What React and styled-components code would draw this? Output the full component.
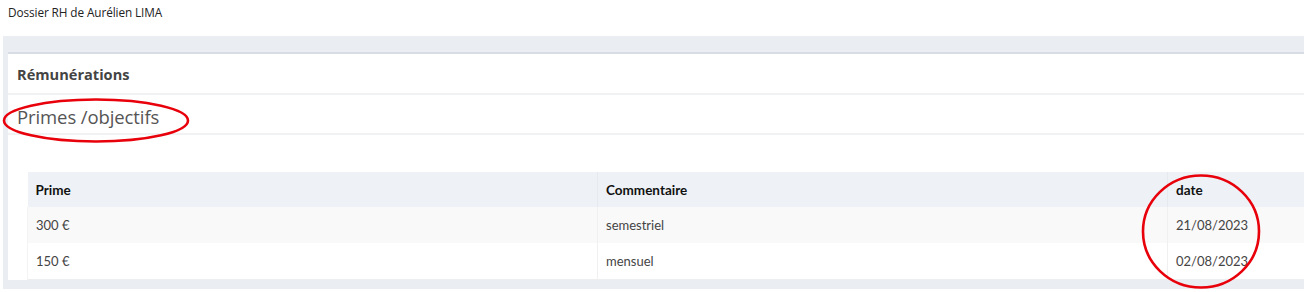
import styled, { createGlobalStyle } from "styled-components";

const GlobalStyle = createGlobalStyle`
  body {
    margin: 0;
    background: #fff;
    font-family: Lato, "Open Sans", sans-serif;
    overflow: hidden;
  }
`;

const rows = [
  { prime: "300 €", comment: "semestriel", date: "21/08/2023" },
  { prime: "150 €", comment: "mensuel", date: "02/08/2023" },
];

const App = () => {
  return (
    <Page>
      <GlobalStyle />
      <PageTitle>Dossier RH de Aurélien LIMA</PageTitle>
      <Shell>
        <Panel>
          <PanelHeader>Rémunérations</PanelHeader>
          <SubHeader>Primes /objectifs</SubHeader>
          <PanelBody>
            <Table>
              <thead>
                <tr>
                  <Th $w={570}>Prime</Th>
                  <Th $w={570}>Commentaire</Th>
                  <Th>date</Th>
                </tr>
              </thead>
              <tbody>
                {rows.map((r, i) => (
                  <Row key={i} $striped={i % 2 === 0}>
                    <Td>{r.prime}</Td>
                    <Td>{r.comment}</Td>
                    <Td>{r.date}</Td>
                  </Row>
                ))}
              </tbody>
            </Table>
          </PanelBody>
        </Panel>
      </Shell>

      {/* hand-drawn annotations over the screenshot */}
      <Mark $x={2} $y={98} $w={188} $h={46}>
        <svg width="188" height="46" viewBox="0 0 188 46">
          <ellipse cx="94" cy="22.5" rx="92" ry="21" fill="none" stroke="#e8000b" strokeWidth="2.6" />
        </svg>
      </Mark>
      <Mark $x={1140} $y={173} $w={122} $h={117}>
        <svg width="122" height="117" viewBox="0 0 122 117">
          <ellipse cx="61" cy="58.5" rx="58" ry="56" fill="none" stroke="#e8000b" strokeWidth="2.6" />
        </svg>
      </Mark>
    </Page>
  );
};

const Page = styled.div`
  position: relative;
  width: 1306px;
  height: 292px;
`;

const PageTitle = styled.div`
  height: 36px;
  padding: 4px 0 0 8px;
  box-sizing: border-box;
  font-family: "Open Sans", sans-serif;
  font-size: 11.8px;
  color: #222;
  letter-spacing: -0.1px;
`;

const Shell = styled.div`
  margin-left: 3px;
  margin-right: 2px;
  background: #eaedf2;
  padding: 16px 0 9px 5px;
`;

const Panel = styled.div`
  background: #fff;
  border-top: 2px solid #d8dce4;
`;

const PanelHeader = styled.div`
  height: 39px;
  display: flex;
  align-items: center;
  padding-left: 9px;
  border-bottom: 2px solid #f1f2f4;
  font-family: "Open Sans", sans-serif;
  font-weight: 700;
  font-size: 14.6px;
  color: #444;
`;

const SubHeader = styled.div`
  height: 40px;
  display: flex;
  align-items: center;
  padding: 5px 0 0 9px;
  box-sizing: border-box;
  border-bottom: 2px solid #f1f2f4;
  font-family: "Open Sans", sans-serif;
  font-size: 18.5px;
  color: #555;
  letter-spacing: -0.1px;
`;

const PanelBody = styled.div`
  padding: 37px 0 0 19px;
`;

const Table = styled.table`
  width: 100%;
  border-collapse: collapse;
  border-bottom: 1px solid #eceef0;
  font-size: 13px;
`;

const Th = styled.th`
  width: ${(p) => (p.$w ? `${p.$w}px` : "auto")};
  height: 35px;
  padding: 0 8px;
  box-sizing: border-box;
  text-align: left;
  font-weight: 700;
  font-size: 13.5px;
  color: #111;
  background: #eef1f6;
  border-left: 1px solid #e6e9ee;

  &:first-child {
    border-left: none;
  }
`;

const Row = styled.tr`
  background: ${(p) => (p.$striped ? "#f9f9f9" : "#fff")};
`;

const Td = styled.td`
  height: 36px;
  padding: 0 8px;
  color: #444;
  border-left: 1px solid #f0f0f0;

  &:first-child {
    border-left: 1px solid #f3f3f3;
  }
`;

const Mark = styled.div`
  position: absolute;
  left: ${(p) => p.$x}px;
  top: ${(p) => p.$y}px;
  width: ${(p) => p.$w}px;
  height: ${(p) => p.$h}px;
  pointer-events: none;

  svg {
    display: block;
  }
`;

export default App;
